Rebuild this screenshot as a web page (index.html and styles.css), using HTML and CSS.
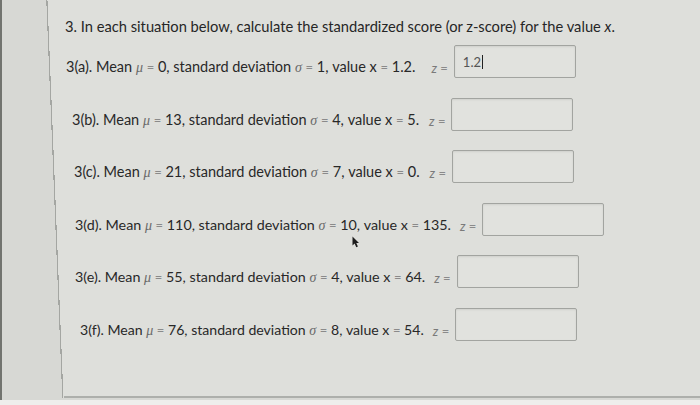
FILE: index.html
```html
<!DOCTYPE html>
<html lang="en">
<head>
<meta charset="utf-8">
<title>Standardized scores</title>
<link rel="stylesheet" href="styles.css">
</head>
<body>
<div class="screen">
  <div class="edge"></div>
  <div class="margin"></div>
  <main class="panel">
    <p class="title">3. In each situation below, calculate the standardized score (or z-score) for the value <i>x</i>.</p>
    <div class="rows">
      <div class="row">
        <span class="q">3(a). Mean <span class="m">μ</span> <span class="eq">=</span> 0, standard deviation <span class="m">σ</span> <span class="eq">=</span> 1, value x <span class="eq">=</span> 1.2.</span>
        <span class="z"><i>z</i> <span class="eq">=</span></span>
        <span class="box"><span class="val">1.2</span><span class="caret"></span></span>
      </div>
      <div class="row">
        <span class="q">3(b). Mean <span class="m">μ</span> <span class="eq">=</span> 13, standard deviation <span class="m">σ</span> <span class="eq">=</span> 4, value x <span class="eq">=</span> 5.</span>
        <span class="z"><i>z</i> <span class="eq">=</span></span>
        <span class="box"></span>
      </div>
      <div class="row">
        <span class="q">3(c). Mean <span class="m">μ</span> <span class="eq">=</span> 21, standard deviation <span class="m">σ</span> <span class="eq">=</span> 7, value x <span class="eq">=</span> 0.</span>
        <span class="z"><i>z</i> <span class="eq">=</span></span>
        <span class="box"></span>
      </div>
      <div class="row">
        <span class="q">3(d). Mean <span class="m">μ</span> <span class="eq">=</span> 110, standard deviation <span class="m">σ</span> <span class="eq">=</span> 10, value x <span class="eq">=</span> 135.</span>
        <span class="z"><i>z</i> <span class="eq">=</span></span>
        <span class="box"></span>
      </div>
      <div class="row">
        <span class="q">3(e). Mean <span class="m">μ</span> <span class="eq">=</span> 55, standard deviation <span class="m">σ</span> <span class="eq">=</span> 4, value x <span class="eq">=</span> 64.</span>
        <span class="z"><i>z</i> <span class="eq">=</span></span>
        <span class="box"></span>
      </div>
      <div class="row">
        <span class="q">3(f). Mean <span class="m">μ</span> <span class="eq">=</span> 76, standard deviation <span class="m">σ</span> <span class="eq">=</span> 8, value x <span class="eq">=</span> 54.</span>
        <span class="z"><i>z</i> <span class="eq">=</span></span>
        <span class="box"></span>
      </div>
    </div>
  </main>
</div>
<svg class="pointer" width="8" height="12" viewBox="0 0 8 12" aria-hidden="true">
  <path d="M0.5 0.5 L0.5 9.5 L2.6 7.6 L4.3 11.2 L5.9 10.5 L4.3 7.1 L7 7.1 Z" fill="#1d1d1d"/>
</svg>
</body>
</html>
```

FILE: styles.css
```css
html, body {
  margin: 0;
  height: 405px;
  overflow: hidden;
  background: #eeeeec;
  font-family: Lato, "Open Sans", sans-serif;
}

.screen {
  display: flex;
  height: 400px;
  background: #d7d8d4;
  overflow: hidden;
}

.edge {
  flex: 0 0 2px;
  background: #72746f;
}

/* left margin with the slightly slanted edge of the question panel (photo perspective) */
.margin {
  flex: 0 0 62px;
  height: 398px;
  background: linear-gradient(87.7deg, #d7d8d4 0 60.2px, #a4a6a2 60.2px 61.4px, #dedfdb 61.4px);
}

.panel {
  flex: 1;
  min-width: 0;
  height: 398px;
  box-sizing: border-box;
  border-bottom: 2px solid #adafab;
  background: #dedfdb;
  padding: 16px 0 0 1px;
}

.title {
  margin: 0;
  font-size: 14.7px;
  line-height: 20px;
  color: #262626;
  white-space: nowrap;
}

.rows {
  display: flex;
  flex-direction: column;
  gap: 19.5px;
  margin-top: 9px;
}

.row {
  display: flex;
  align-items: flex-end;
  font-size: 14.5px;
  line-height: 20px;
  color: #282828;
}

.row:nth-child(1) { padding-left: 1px; }
.row:nth-child(2) { padding-left: 7px; }
.row:nth-child(3) { padding-left: 9px; }
.row:nth-child(4) { padding-left: 10px; font-size: 14.3px; }
.row:nth-child(5) { padding-left: 10px; font-size: 14.3px; }
.row:nth-child(6) { padding-left: 15px; font-size: 14.1px; }

.q {
  white-space: pre;
}

.m {
  font-family: "Liberation Serif", serif;
  font-style: italic;
  font-size: 14px;
  color: #6a6a6a;
}

.eq {
  color: #8a8a8a;
  font-size: 13px;
}

.z {
  margin-left: 9px;
  font-size: 13px;
  color: #7a7a7a;
  white-space: pre;
}

.row:nth-child(2) .z,
.row:nth-child(3) .z {
  margin-left: 10px;
}

.row:first-child .z {
  margin-left: 16px;
}

.box {
  display: flex;
  align-items: center;
  flex: 0 0 122px;
  margin-left: 6px;
  height: 33px;
  box-sizing: border-box;
  border: 1px solid #a2a4a0;
  border-radius: 2px;
  background: #e1e2de;
  box-shadow: inset 0 1px 2px rgba(0, 0, 0, 0.08);
  padding-left: 8px;
}

.val {
  font-size: 13px;
  color: #555;
}

.caret {
  width: 1px;
  height: 14px;
  background: #222;
  margin-left: 1px;
}

.pointer {
  position: absolute;
  left: 352px;
  top: 236px;
}
```
